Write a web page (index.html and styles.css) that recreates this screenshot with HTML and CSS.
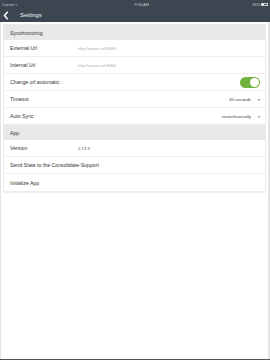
FILE: index.html
```html
<!DOCTYPE html>
<html lang="en">
<head>
  <meta charset="UTF-8">
  <title>Settings</title>
  <link rel="stylesheet" href="styles.css">
</head>
<body>
  <header class="topbar">
    <div class="status">
      <span class="carrier">Carrier &#8776;</span>
      <span class="clock">9:56 AM</span>
      <span class="battery">26% <i class="batt"><b></b></i></span>
    </div>
    <div class="nav">
      <svg class="back" width="6" height="9" viewBox="0 0 6 9"><path d="M4.8 0.8 L1.4 4.5 L4.8 8.2" fill="none" stroke="#fff" stroke-width="1.4"/></svg>
      <span class="title">Settings</span>
    </div>
  </header>

  <main class="page">
    <div class="card">
      <div class="group-head">Synchronizing</div>
      <div class="row">
        <span class="label fixed">External Url</span>
        <span class="value">http://server-url:8080/</span>
      </div>
      <div class="row">
        <span class="label fixed">Internal Url</span>
        <span class="value">http://server-url:8080/</span>
      </div>
      <div class="row">
        <span class="label">Change url automatic</span>
        <span class="toggle"><span class="knob"></span></span>
      </div>
      <div class="row">
        <span class="label">Timeout</span>
        <span class="select">30 seconds <span class="caret">&#9662;</span></span>
      </div>
      <div class="row">
        <span class="label">Auto Sync</span>
        <span class="select">never/manually <span class="caret">&#9662;</span></span>
      </div>
      <div class="group-head">App</div>
      <div class="row">
        <span class="label fixed">Version</span>
        <span class="version">5.13.3</span>
      </div>
      <div class="row">
        <span class="label">Send State to the Consolidate-Support</span>
      </div>
      <div class="row last">
        <span class="label">Initialize App</span>
      </div>
    </div>
  </main>
</body>
</html>
```

FILE: styles.css
```css
* {
  margin: 0;
  padding: 0;
  box-sizing: border-box;
  font-family: 'Liberation Sans', Arial, sans-serif;
}

body {
  width: 270px;
  height: 360px;
  background-color: #e4e4e4;
  display: flex;
  flex-direction: column;
  overflow: hidden;
  border-bottom: 1px solid #555;
}

.topbar {
  background-color: #3c4650;
  color: white;
  height: 22px;
}

.status {
  display: flex;
  justify-content: space-between;
  align-items: center;
  height: 8px;
  padding: 0 2px;
  font-size: 4px;
  color: #c8cdd2;
}

.clock {
  margin-left: 14px;
}

.battery {
  display: flex;
  align-items: center;
  gap: 1px;
}

.batt {
  display: inline-block;
  width: 7px;
  height: 3px;
  border: 0.5px solid #c8cdd2;
}

.batt b {
  display: block;
  width: 2px;
  height: 100%;
  background-color: white;
}

.nav {
  display: flex;
  align-items: center;
  height: 14px;
  padding-left: 3px;
}

.back {
  margin-right: 11px;
}

.title {
  font-size: 6px;
  color: #f0f2f4;
}

.page {
  flex: 1;
  background-color: white;
  margin: 0 2px 0 1px;
  padding: 2px 2px 0 2px;
}

.card {
  border: 1px solid #ececec;
  box-shadow: 0 1px 1px rgba(0,0,0,0.06);
}

.group-head {
  height: 15px;
  display: flex;
  align-items: center;
  padding-left: 6px;
  background-color: #e8e8e8;
  font-size: 5.2px;
  color: #333;
}

.row {
  height: 17px;
  display: flex;
  align-items: center;
  padding: 0 5px 0 6px;
  border-bottom: 1px solid #eeeeee;
  font-size: 5.2px;
  color: #333;
}

.row.last {
  border-bottom: none;
}

.label {
  flex: 1;
  white-space: nowrap;
}

.label.fixed {
  flex: 0 0 68px;
}

.value {
  font-size: 4px;
  color: #aaa;
}

.version {
  font-size: 4.3px;
  color: #555;
}

.select {
  font-size: 4.3px;
  color: #444;
  display: flex;
  align-items: center;
  gap: 7px;
}

.caret {
  font-size: 4px;
  color: #777;
}

.toggle {
  width: 20px;
  height: 11px;
  border-radius: 6px;
  background-color: #72b33f;
  display: flex;
  justify-content: flex-end;
  align-items: center;
  padding: 1px;
}

.knob {
  width: 9px;
  height: 9px;
  border-radius: 50%;
  background-color: white;
}
```
